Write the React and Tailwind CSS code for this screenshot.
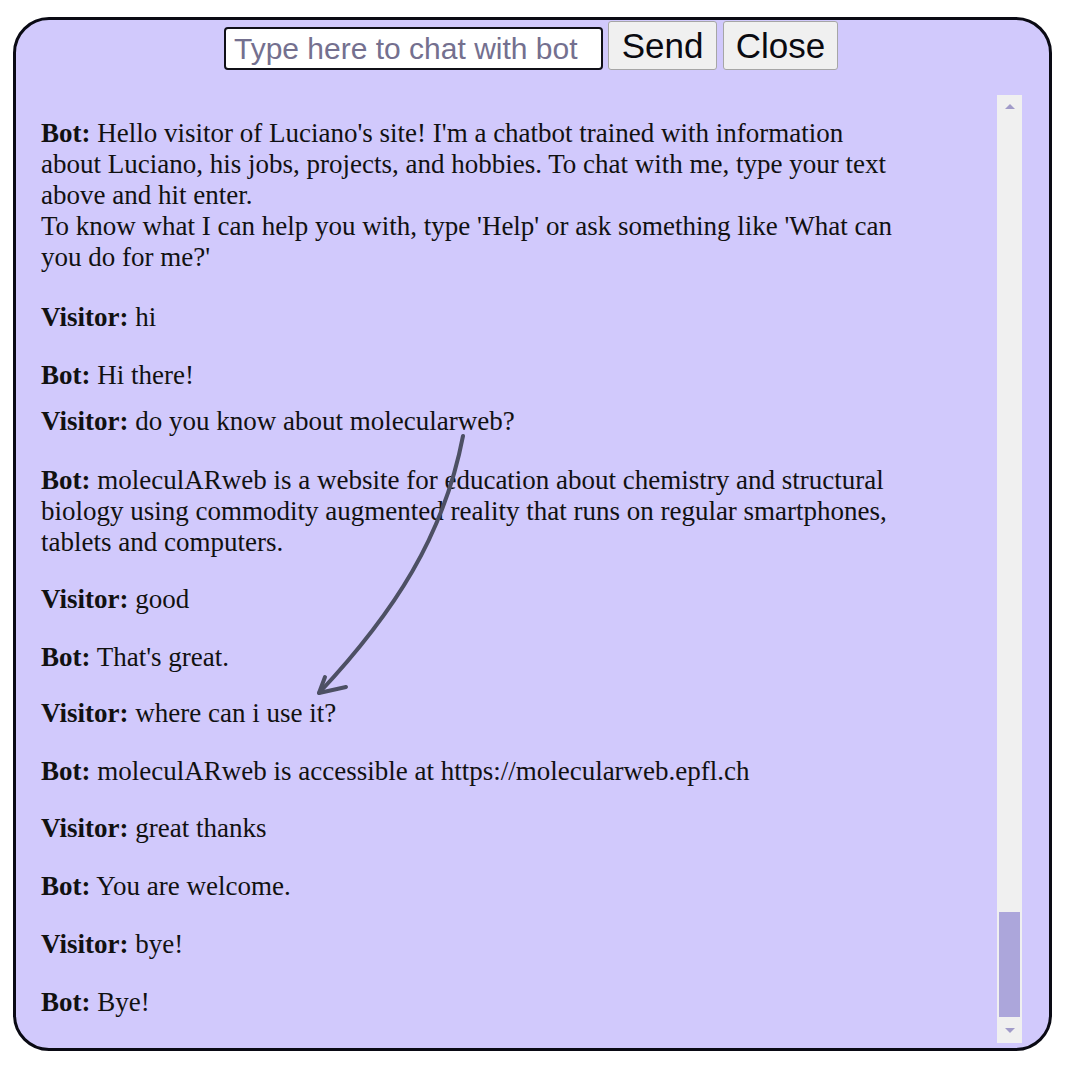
import React from "react";

const msgs = [
  { who: "Bot", text: ["Hello visitor of Luciano's site! I'm a chatbot trained with information about Luciano, his jobs, projects, and hobbies. To chat with me, type your text above and hit enter.", "To know what I can help you with, type 'Help' or ask something like 'What can you do for me?'"], mt: "mt-0" },
  { who: "Visitor", text: ["hi"], mt: "mt-[29px]" },
  { who: "Bot", text: ["Hi there!"], mt: "mt-[27px]" },
  { who: "Visitor", text: ["do you know about molecularweb?"], mt: "mt-[15px]" },
  { who: "Bot", text: ["moleculARweb is a website for education about chemistry and structural biology using commodity augmented reality that runs on regular smartphones, tablets and computers."], mt: "mt-[28px]" },
  { who: "Visitor", text: ["good"], mt: "mt-[26px]" },
  { who: "Bot", text: ["That's great."], mt: "mt-[27px]" },
  { who: "Visitor", text: ["where can i use it?"], mt: "mt-[25px]" },
  { who: "Bot", text: ["moleculARweb is accessible at https://molecularweb.epfl.ch"], mt: "mt-[27px]" },
  { who: "Visitor", text: ["great thanks"], mt: "mt-[26px]" },
  { who: "Bot", text: ["You are welcome."], mt: "mt-[27px]" },
  { who: "Visitor", text: ["bye!"], mt: "mt-[27px]" },
  { who: "Bot", text: ["Bye!"], mt: "mt-[27px]" },
];

export default function App() {
  return (
    <div className="relative w-[1076px] h-[1072px] bg-white pt-[17px] pl-[13px]">
      <div className="w-[1039px] h-[1034px] border-[3px] border-[#0a0a14] rounded-[36px] bg-[#d1c9fc] flex flex-col">
        <div className="flex justify-center items-start pt-[1px] pr-[3px]" style={{ fontFamily: '"Liberation Sans", Arial, sans-serif' }}>
          <input
            type="text"
            placeholder="Type here to chat with bot"
            className="mt-[6px] w-[379px] h-[43px] border-2 border-[#101018] rounded-[4px] bg-white px-[8px] text-[30px] leading-none placeholder:text-[#74708f] outline-none"
          />
          <button className="ml-[5px] h-[49px] w-[109px] bg-[#f0f0f0] border border-[#a6a6a6] rounded-[3px] text-[35px] text-[#0a0a10] leading-none flex items-center justify-center">
            Send
          </button>
          <button className="ml-[6px] h-[49px] w-[115px] bg-[#f0f0f0] border border-[#a6a6a6] rounded-[3px] text-[35px] text-[#0a0a10] leading-none flex items-center justify-center">
            Close
          </button>
        </div>
        <div className="flex flex-1 mt-[25px] mb-[5px] mr-[27px]">
          <div className="flex-1 pl-[25px] pt-[23px]" style={{ fontFamily: '"Liberation Serif", "Times New Roman", serif' }}>
            <div className="w-[860px] text-[27px] leading-[31px] text-[#111]">
              {msgs.map((m, i) => (
                <div key={i} className={m.mt}>
                  {m.text.map((t, j) => (
                    <div key={j}>
                      {j === 0 && <b>{m.who}:</b>}
                      {j === 0 ? " " : ""}
                      {t}
                    </div>
                  ))}
                </div>
              ))}
            </div>
          </div>
          <div className="w-[25px] bg-[#f0f0f0] flex flex-col items-center">
            <div className="h-[22px] flex items-center justify-center">
              <div className="w-0 h-0 border-l-[5px] border-r-[5px] border-b-[5px] border-l-transparent border-r-transparent border-b-[#a19bc9]" />
            </div>
            <div className="flex-1 w-full" />
            <div className="w-[21px] h-[105px] bg-[#aca6db]" />
            <div className="h-[26px] flex items-center justify-center">
              <div className="w-0 h-0 border-l-[5px] border-r-[5px] border-t-[5px] border-l-transparent border-r-transparent border-t-[#a19bc9]" />
            </div>
          </div>
        </div>
      </div>
      <svg className="absolute left-0 top-0 pointer-events-none" width="1076" height="1072" viewBox="0 0 1076 1072">
        <g fill="none" stroke="#4d5064" strokeWidth="4" strokeLinecap="round" strokeLinejoin="round">
          <path d="M463 436 C 444 535, 395 612, 319 693" />
          <path d="M325 677 L 319 693 L 346 687" />
        </g>
      </svg>
    </div>
  );
}
